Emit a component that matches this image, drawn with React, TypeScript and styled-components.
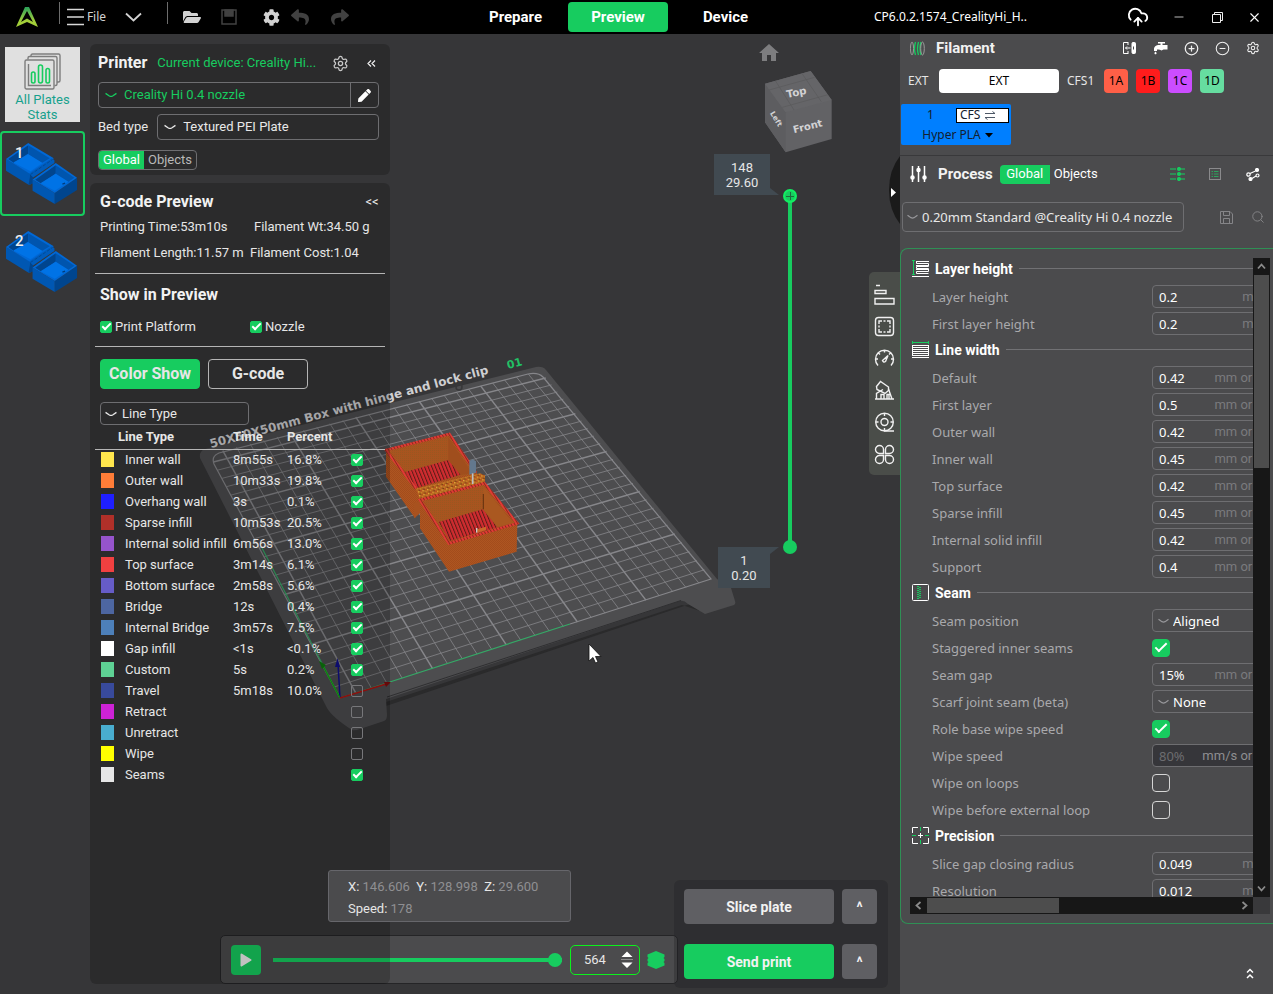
import React from "react";
import styled, { createGlobalStyle, css } from "styled-components";
import { CloudUpload, Settings, Search, CirclePlus, CircleMinus, Minus, X } from "lucide-react";
import { FaFolderOpen, FaCog, FaReply, FaShare, FaPen } from "react-icons/fa";
import { MdHome } from "react-icons/md";

const UI = 'Roboto, "Noto Sans", sans-serif';
const SYS = '"Noto Sans", "Open Sans", sans-serif';
const GREEN = "#17cc5f";

const Global = createGlobalStyle`
  *, *::before, *::after { box-sizing: border-box; }
  html, body { margin: 0; padding: 0; background: #363638; }
  body { font-family: ${UI}; font-size: 13px; line-height: 16px; color: #e6e6e6; }
  button, input, select { font: inherit; color: inherit; margin: 0; }
  button { padding: 0; border: 0; background: none; cursor: pointer; }
  h2, h3, p, ul { margin: 0; padding: 0; }
  svg { display: block; flex: none; }
`;

const Shell = styled.div`
  display: flex;
  flex-direction: column;
  min-height: 100vh;
`;

/* ---------- title bar ---------- */

const TitleBar = styled.header`
  display: grid;
  grid-template-columns: 1fr 320px 490px;
  align-items: center;
  height: 34px;
  background: #000;
  font-family: ${SYS};
`;
const BarTools = styled.div`
  display: flex;
  align-items: center;
  padding-left: 15px;
`;
const BarRule = styled.span<{ $ml: number }>`
  width: 1px;
  height: 22px;
  margin-left: ${(p) => p.$ml}px;
  margin-top: -8px;
  background: #6d6d6d;
`;
const BarButton = styled.button<{ $w: number; $ml?: number; $dim?: boolean }>`
  display: flex;
  flex: none;
  align-items: center;
  justify-content: center;
  gap: 3px;
  width: ${(p) => p.$w}px;
  height: 30px;
  margin-left: ${(p) => p.$ml ?? 0}px;
  font-size: 12px;
  color: ${(p) => (p.$dim ? "#414141" : "#d2d2d2")};
`;
const BarNav = styled.nav`
  display: flex;
  font-family: ${UI};
`;
const NavTab = styled.button<{ $w: number; $on?: boolean }>`
  width: ${(p) => p.$w}px;
  height: 30px;
  border-radius: 4px;
  font-size: 15px;
  font-weight: 700;
  color: #fff;
  background: ${(p) => (p.$on ? GREEN : "transparent")};
`;
const BarRight = styled.div`
  display: flex;
  align-items: center;
  padding-left: 91px;
  color: #fff;
`;
const FileTitle = styled.span`
  flex: 1;
  font-size: 12px;
`;

/* ---------- workspace ---------- */

const Workspace = styled.div`
  display: flex;
  flex: 1;
`;
const Viewport = styled.main`
  position: relative;
  display: flex;
  flex: 1;
  min-width: 0;
  overflow: hidden;
  background: #363638;
`;
const SceneSvg = styled.svg`
  position: absolute;
  left: 0;
  top: 0;
`;
const PlateList = styled.div`
  position: relative;
  display: flex;
  flex-direction: column;
  align-items: center;
  gap: 3px;
  width: 85px;
  padding-top: 13px;
`;
const StatsCard = styled.button`
  display: flex;
  flex-direction: column;
  align-items: center;
  width: 75px;
  height: 75px;
  margin-bottom: 6px;
  padding-top: 6px;
  background: #e0e0e0;
  color: #17a08d;
  line-height: 15px;
`;
const StatsText = styled.span`
  margin-top: 2px;
`;
const PlateCard = styled.button<{ $on?: boolean }>`
  position: relative;
  width: 85px;
  height: 85px;
  border: 2px solid ${(p) => (p.$on ? GREEN : "transparent")};
  border-radius: 4px;
`;
const PlateNo = styled.span`
  position: absolute;
  left: 13px;
  top: 12px;
  font-size: 15px;
  font-weight: 500;
  color: #eee;
`;
const ThumbSvg = styled.svg`
  margin: -2px;
`;

const PanelColumn = styled.div`
  position: relative;
  display: flex;
  flex-direction: column;
  gap: 8px;
  width: 300px;
  margin: 10px 0 10px 5px;
`;
const Panel = styled.section<{ $grow?: boolean }>`
  flex: ${(p) => (p.$grow ? "1" : "none")};
  padding: ${(p) => (p.$grow ? "9px 5px" : "8px 11px 5px 8px")};
  border-radius: 6px;
  background: rgba(0, 0, 0, 0.2);
`;
const Row = styled.div<{ $gap?: number; $h: number }>`
  display: flex;
  align-items: center;
  gap: ${(p) => p.$gap ?? 0}px;
  height: ${(p) => p.$h}px;
`;
const Title = styled.h2`
  font-size: 16px;
  line-height: 20px;
  font-weight: 700;
  color: #f2f2f2;
`;
const GrowTitle = styled(Title)`
  flex: 1;
`;
const Device = styled.span`
  flex: 1;
  color: ${GREEN};
`;
const IconButton = styled.button<{ $c?: string }>`
  display: flex;
  align-items: center;
  justify-content: center;
  min-width: 16px;
  height: 20px;
  color: ${(p) => p.$c ?? "#f0f0f0"};
`;

const Combo = styled.div<{ $h: number; $w?: number; $gap?: number; $c?: string }>`
  display: flex;
  align-items: center;
  gap: ${(p) => p.$gap ?? 7}px;
  flex: ${(p) => (p.$w ? "none" : "1")};
  width: ${(p) => (p.$w ? p.$w + "px" : "auto")};
  height: ${(p) => p.$h}px;
  padding-left: ${(p) => (p.$gap ? 4 : 6)}px;
  border: 1px solid #6e6e71;
  border-radius: 4px;
  color: ${(p) => p.$c ?? "#e8e8e8"};
`;
const Select = styled.select`
  flex: 1;
  min-width: 0;
  padding: 0;
  border: 0;
  outline: 0;
  appearance: none;
  background: transparent;
  color: inherit;
`;
const EditButton = styled.button`
  display: flex;
  align-items: center;
  justify-content: center;
  align-self: stretch;
  width: 28px;
  border-left: 1px solid #6e6e71;
  color: #fff;
`;
const Segments = styled.div`
  display: flex;
  width: 99px;
  height: 20px;
  margin-top: 12px;
  border: 1px solid #6e6e71;
  border-radius: 4px;
  overflow: hidden;
`;
const Segment = styled.button<{ $w: number; $on?: boolean }>`
  width: ${(p) => p.$w}px;
  color: ${(p) => (p.$on ? "#fff" : "#b9b9b9")};
  background: ${(p) => (p.$on ? GREEN : "transparent")};
`;

const Block = styled.div`
  padding: 0 5px;
  border-bottom: 1px solid #b5b5b5;
`;
const Stats = styled.div`
  display: grid;
  grid-template-columns: 150px 1fr;
  row-gap: 10px;
  padding: 7px 0 12px;
  white-space: nowrap;
`;
const Indent = styled.span`
  padding-left: 4px;
`;
const CheckGroup = styled.div`
  display: grid;
  grid-template-columns: 150px 1fr;
  padding: 3px 0 11px;
`;
const CheckLabel = styled.label`
  display: flex;
  align-items: center;
  gap: 3px;
`;
const Check = styled.input.attrs({ type: "checkbox" })<{ $s: number }>`
  flex: none;
  width: ${(p) => p.$s}px;
  height: ${(p) => p.$s}px;
  appearance: none;
  display: grid;
  place-items: center;
  border: 1px solid ${(p) => (p.$s > 14 ? "#d5d5d5" : "#77777a")};
  border-radius: ${(p) => (p.$s > 14 ? 4 : 2)}px;
  &:checked {
    border-color: ${GREEN};
    background: ${GREEN};
  }
  &:checked::after {
    content: "";
    width: ${(p) => (p.$s > 14 ? 12 : 9)}px;
    height: ${(p) => (p.$s > 14 ? 6 : 5)}px;
    margin-bottom: ${(p) => (p.$s > 14 ? 4 : 3)}px;
    border: solid #fff;
    border-width: 0 0 2px 2px;
    transform: rotate(-45deg);
  }
`;
const Modes = styled.div`
  display: flex;
  gap: 8px;
  padding: 12px 5px 13px;
`;
const ModeButton = styled.button<{ $on?: boolean }>`
  width: 100px;
  height: 30px;
  border: 1px solid ${(p) => (p.$on ? GREEN : "#b5b5b5")};
  border-radius: 4px;
  font-size: 16px;
  font-weight: 700;
  background: ${(p) => (p.$on ? GREEN : "transparent")};
`;
const ComboPad = styled.div`
  padding-left: 5px;
`;
const TypeTable = styled.table`
  width: 100%;
  table-layout: fixed;
  border-collapse: collapse;
  white-space: nowrap;
  th {
    height: 24px;
    padding: 0;
    border-bottom: 1px solid #b5b5b5;
    text-align: left;
    font-weight: 700;
  }
  td {
    height: 21px;
    padding: 0;
  }
`;
const Col = styled.col<{ $w: number }>`
  width: ${(p) => p.$w}px;
`;
const TypeName = styled.div`
  display: flex;
  align-items: center;
  gap: 11px;
  padding-left: 6px;
`;
const HeadPad = styled.th`
  && { padding-left: 23px; }
`;
const Swatch = styled.span<{ $c: string }>`
  width: 13px;
  height: 15px;
  background: ${(p) => p.$c};
`;

/* ---------- floating widgets over the canvas ---------- */

const Player = styled.div`
  position: absolute;
  left: 220px;
  right: 222px;
  bottom: 10px;
  display: flex;
  align-items: center;
  height: 49px;
  padding: 0 12px 0 10px;
  border: 1px solid #252527;
  border-radius: 5px;
  background: #4b4b4d;
`;
const PlayButton = styled.button`
  display: grid;
  place-items: center;
  width: 30px;
  height: 30px;
  border-radius: 4px;
  background: ${GREEN};
`;
const thumb = css`
  appearance: none;
  width: 14px;
  height: 14px;
  border: 0;
  border-radius: 7px;
  background: ${GREEN};
`;
const StepRange = styled.input.attrs({ type: "range" })`
  flex: 1;
  min-width: 0;
  height: 14px;
  margin: 0 8px 0 12px;
  appearance: none;
  background: linear-gradient(${GREEN}, ${GREEN}) center / 100% 4px no-repeat;
  &::-webkit-slider-thumb { ${thumb} }
`;
const Stepper = styled.div`
  display: flex;
  align-items: center;
  width: 70px;
  height: 30px;
  padding: 0 6px 0 13px;
  border: 1px solid #0cf21c;
  border-radius: 5px;
`;
const StepInput = styled.input`
  flex: 1;
  min-width: 0;
  padding: 0;
  border: 0;
  outline: 0;
  background: transparent;
`;
const LayersIcon = styled.span`
  margin-left: 7px;
`;
const Readout = styled.div`
  position: absolute;
  left: 328px;
  bottom: 72px;
  width: 243px;
  height: 52px;
  padding: 5px 19px;
  border: 1px solid #66666b;
  border-radius: 3px;
  background: #4b4b4d;
  line-height: 22px;
  white-space: pre;
  color: #8f8f92;
  b { font-weight: 400; color: #e6e6e6; }
`;
const ActionBox = styled.div`
  position: absolute;
  right: 12px;
  bottom: 6px;
  display: grid;
  grid-template-columns: 150px 35px;
  gap: 20px 8px;
  padding: 9px 11px 9px 10px;
  border-radius: 6px;
  background: rgba(30, 30, 32, 0.3);
`;
const ActionButton = styled.button<{ $go?: boolean }>`
  height: 35px;
  border-radius: 4px;
  font-weight: 700;
  font-size: 14px;
  color: #f2f2f2;
  background: ${(p) => (p.$go ? GREEN : "#5f5f63")};
`;
const ViewGizmo = styled.div`
  position: absolute;
  right: 66px;
  top: 7px;
  display: flex;
  flex-direction: column;
  gap: 5px;
`;
const HomeButton = styled.button`
  width: 24px;
  margin-left: -7px;
  color: #7d7d7f;
`;
const LayerSlider = styled.div`
  position: absolute;
  right: 103px;
  top: 155px;
  display: grid;
  width: 14px;
  height: 365px;
`;
const LayerRange = styled.input.attrs({ type: "range" })<{ $top?: boolean }>`
  grid-area: 1 / 1;
  width: 14px;
  height: 365px;
  appearance: none;
  writing-mode: vertical-lr;
  direction: rtl;
  background: ${(p) => (p.$top ? `linear-gradient(${GREEN}, ${GREEN}) center / 4px 351px no-repeat` : "transparent")};
  pointer-events: none;
  &::-webkit-slider-thumb {
    ${thumb}
    pointer-events: auto;
    ${(p) =>
      p.$top &&
      css`
        border: 2px solid #12ee62;
        background: linear-gradient(#1d6b3c, #1d6b3c) center / 8px 1px no-repeat,
          linear-gradient(#1d6b3c, #1d6b3c) center / 1px 8px no-repeat, ${GREEN};
      `}
  }
`;
const LayerTip = styled.div<{ $low?: boolean }>`
  position: absolute;
  right: 130px;
  top: ${(p) => (p.$low ? 513 : 120)}px;
  width: ${(p) => (p.$low ? 52 : 56)}px;
  height: 41px;
  padding-top: 6px;
  background: #414a51;
  line-height: 15px;
  text-align: center;
  &::after {
    content: "";
    position: absolute;
    left: 100%;
    ${(p) => (p.$low ? "top: 0;" : "bottom: 0;")}
    border-left: 9px solid #414a51;
    border-${(p) => (p.$low ? "bottom" : "top")}: 7px solid transparent;
  }
`;
const ToolStrip = styled.div`
  position: absolute;
  right: 0;
  top: 238px;
  display: flex;
  flex-direction: column;
  align-items: center;
  gap: 12px;
  width: 31px;
  padding: 12px 1px 11px 0;
  border-radius: 5px 0 0 5px;
  background: #4a4d49;
  color: #fff;
`;
const CollapseTab = styled.button`
  position: absolute;
  right: 0;
  top: 122px;
  width: 11px;
  height: 68px;
`;

/* ---------- sidebar ---------- */

const Sidebar = styled.aside`
  display: flex;
  flex-direction: column;
  flex: none;
  width: 373px;
  background: #4b4b4d;
  font-family: ${SYS};
`;
const SideHead = styled.div<{ $h: number }>`
  display: flex;
  align-items: center;
  height: ${(p) => p.$h}px;
  padding: 0 12px 0 10px;
`;
const SideIcons = styled.div<{ $gap: number }>`
  display: flex;
  flex: 1;
  align-items: center;
  justify-content: flex-end;
  gap: ${(p) => p.$gap}px;
`;
const HeadText = styled.h2`
  margin-left: 11px;
  font-family: ${UI};
  font-size: 15px;
  font-weight: 700;
  color: #f2f2f2;
`;
const SlotRow = styled.div`
  display: flex;
  align-items: center;
  gap: 8px;
  padding: 7px 8px 11px;
  font-size: 12px;
`;
const SlotName = styled.span<{ $w: number }>`
  width: ${(p) => p.$w}px;
`;
const Slot = styled.button<{ $c: string; $w: number }>`
  width: ${(p) => p.$w}px;
  height: 24px;
  border-radius: 4px;
  background: ${(p) => p.$c};
  color: #000;
`;
const Spool = styled.div`
  width: 110px;
  height: 41px;
  margin-left: 1px;
  padding: 3px 2px;
  border-radius: 2px;
  background: #007fff;
  color: #14202e;
  font-size: 12px;
`;
const SpoolTop = styled.div`
  display: flex;
  align-items: center;
  justify-content: space-between;
  padding-left: 24px;
`;
const CfsButton = styled.button`
  display: flex;
  align-items: center;
  gap: 4px;
  width: 53px;
  height: 15px;
  padding-left: 3px;
  border: 1px solid #000;
  background: #fff;
`;
const SpoolName = styled.button`
  display: flex;
  align-items: center;
  justify-content: center;
  gap: 4px;
  width: 100%;
  height: 24px;
  padding-left: 3px;
`;
const SideRule = styled.div`
  height: 1px;
  margin-top: 10px;
  background: #39393b;
`;
const ProcTabs = styled.div`
  display: flex;
  height: 19px;
  margin-left: 7px;
  font-family: ${UI};
`;
const ProcTab = styled.button<{ $on?: boolean }>`
  width: ${(p) => (p.$on ? 50 : 52)}px;
  height: 19px;
  border-radius: 4px 0 0 4px;
  color: #fff;
  background: ${(p) => (p.$on ? GREEN : "transparent")};
`;
const Preset = styled.div`
  display: flex;
  align-items: center;
  padding: 10px 7px 0 2px;
`;
const Frame = styled.div`
  display: grid;
  grid-template-columns: 1fr 17px;
  grid-template-rows: 639px 17px;
  margin-top: 16px;
  padding: 9px 3px 9px 9px;
  border: 1px solid #2f8f55;
  border-right: 0;
  border-radius: 8px 0 0 8px;
`;
const Scroller = styled.div`
  min-width: 0;
  overflow: hidden;
`;
const Form = styled.form`
  width: 361px;
  margin-top: -3px;
`;
const Group = styled.h3`
  display: flex;
  align-items: center;
  gap: 6px;
  height: 27px;
  padding-left: 2px;
  font-family: ${UI};
  font-size: 14px;
  font-weight: 700;
  color: #fff;
  &::after {
    content: "";
    flex: 1;
    height: 1px;
    background: #717174;
  }
`;
const Field = styled.div`
  display: flex;
  align-items: center;
  height: 27px;
  padding: 2px 0 0 22px;
`;
const FieldLabel = styled.label`
  width: 220px;
  color: #a9a9ac;
`;
const Box = styled.div<{ $off?: boolean; $pick?: boolean }>`
  display: flex;
  align-items: center;
  gap: 4px;
  width: 119px;
  height: 23px;
  padding: 0 5px 0 ${(p) => (p.$pick ? 5 : 6)}px;
  border: 1px solid #6e6e71;
  border-radius: 4px;
  background: ${(p) => (p.$off ? "#36363a" : "transparent")};
  color: ${(p) => (p.$off ? "#6d6d70" : "#fff")};
`;
const BoxInput = styled.input`
  flex: 1;
  min-width: 0;
  padding: 0;
  border: 0;
  outline: 0;
  background: transparent;
`;
const Unit = styled.span<{ $off?: boolean }>`
  font-family: ${UI};
  color: ${(p) => (p.$off ? "#8e8e91" : "#7a7a7d")};
`;
const VBar = styled.div`
  display: flex;
  flex-direction: column;
  justify-content: space-between;
  padding: 0 1px;
  background: #171717;
`;
const HBar = styled.div`
  display: flex;
  padding: 1px 0;
  background: #171717;
`;
const ScrollArrow = styled.button`
  display: grid;
  place-items: center;
  flex: none;
  width: 17px;
  height: 17px;
  color: #8b8b8b;
  ${VBar} & { width: 15px; }
  ${HBar} & { height: 15px; }
`;
const VThumb = styled.div`
  height: 193px;
  margin-bottom: auto;
  background: #4d4d4d;
`;
const HThumb = styled.div`
  width: 132px;
  margin-right: auto;
  background: #4d4d4d;
`;
const Corner = styled.div`
  background: #39393b;
`;
const SideFoot = styled.div`
  display: flex;
  flex: 1;
  align-items: flex-end;
  justify-content: flex-end;
  padding: 0 15px 11px;
`;

/* ---------- drawings ---------- */

const Chevron = ({ c = "currentColor", w = 11 }: { c?: string; w?: number }) => (
  <svg width={w} height={w / 2} viewBox="0 0 11 5" fill="none" stroke={c} strokeWidth="1.2">
    <path d="M0.5 1L4 3.4Q5.500 4.200 7 3.400L10.500 1" />
  </svg>
);
const Arrow = ({ r }: { r: number }) => (
  <svg width="9" height="9" viewBox="0 0 9 9" fill="none" stroke="currentColor" strokeWidth="1.800">
    <path d="M1 6.500L4.500 2.500L8 6.500" transform={`rotate(${r} 4.5 4.5)`} />
  </svg>
);

type Pt = [number, number];
const corners: Pt[] = [[209, 454], [540, 371], [712, 579], [340, 698]];
const project = (u: number, v: number): Pt => {
  const [[x0, y0], [x1, y1], [x2, y2], [x3, y3]] = corners;
  const dx1 = x1 - x2, dx2 = x3 - x2, sx = x0 - x1 + x2 - x3;
  const dy1 = y1 - y2, dy2 = y3 - y2, sy = y0 - y1 + y2 - y3;
  const d = dx1 * dy2 - dx2 * dy1;
  const g = (sx * dy2 - dx2 * sy) / d;
  const h = (dx1 * sy - sx * dy1) / d;
  const w = g * u + h * v + 1;
  return [
    ((x1 - x0 + g * x1) * u + (x3 - x0 + h * x3) * v + x0) / w,
    ((y1 - y0 + g * y1) * u + (y3 - y0 + h * y3) * v + y0) / w,
  ];
};
const seg = (a: Pt, b: Pt) => `M${a[0].toFixed(2)} ${a[1].toFixed(2)}L${b[0].toFixed(2)} ${b[1].toFixed(2)}`;
const CELLS = 26;
const gridPath = (major: boolean) => {
  let d = "";
  for (let i = 1; i < CELLS; i++) {
    if ((i % 5 === 1) !== major) continue;
    d += seg(project(i / CELLS, 0), project(i / CELLS, 1));
    d += seg(project(0, i / CELLS), project(1, i / CELLS));
  }
  return d;
};

const Scene = () => (
  <SceneSvg width="900" height="960" viewBox="0 34 900 960" aria-hidden="true">
    <defs>
      <pattern id="floor" width="10" height="10" patternUnits="userSpaceOnUse" patternTransform="rotate(-22)">
        <rect width="10" height="10" fill="#d02c30" />
        <rect width="3" height="10" fill="#5a1c17" />
      </pattern>
      <pattern id="rim" width="9" height="9" patternUnits="userSpaceOnUse" patternTransform="rotate(-30)">
        <rect width="9" height="9" fill="#e03a35" />
        <rect width="3" height="9" fill="#8d2a1c" />
      </pattern>
      <pattern id="weave" width="6" height="6" patternUnits="userSpaceOnUse">
        <rect width="6" height="6" fill="#ae5621" />
        <rect width="3" height="3" fill="#a34c1c" />
        <rect x="3" y="3" width="3" height="3" fill="#a34c1c" />
      </pattern>
      <pattern id="inner" width="6" height="6" patternUnits="userSpaceOnUse">
        <rect width="6" height="6" fill="#a8541f" />
        <rect width="3" height="3" fill="#9a5720" />
      </pattern>
      <pattern id="mix" width="14" height="12" patternUnits="userSpaceOnUse" patternTransform="rotate(-14)">
        <rect width="14" height="12" fill="#b5601f" />
        <rect width="4" height="4" fill="#e0b53a" />
        <rect x="7" y="5" width="5" height="3" fill="#d8a52f" />
        <rect x="4" y="8" width="4" height="4" fill="#6e3512" />
        <rect x="10" width="3" height="3" fill="#c23a22" />
      </pattern>
    </defs>

    <path d="M386 702L682 605L700 611L690 604L386 706Z" fill="#2a2a2b" />
    <path
      d="M205 449Q199 451 200 458L327 708Q332 717 352 730Q355 731 360 729L384 721Q387 720 387 715L386 699L680 601Q684 600 688 604L705 614L734 605Q736 604 735 601L731 588L717 579L546 370Q543 366 536 367Z"
      fill="#4d4d4f"
    />
    <path d="M387 697L681 600.500" stroke="#2f2f31" strokeWidth="1" />
    <g fill="none" stroke="#86868a">
      <path d={gridPath(false)} strokeWidth="0.8" />
      <path d={gridPath(true)} strokeWidth="1.500" />
      <path d="M340 698L214 464Q211 456 219 453L528 374Q538 372 543 377L711 579L570 624" strokeWidth="1.200" />
    </g>
    <path d="M340 698L262 548M340 698L570 624" stroke="#35a866" strokeWidth="1.200" />
    <circle cx="459" cy="387" r="3" fill="none" stroke="#38383a" strokeWidth="1.500" />
    <text transform="translate(211 448) rotate(-15)" fontFamily="DejaVu Sans" fontWeight="700" fontSize="12" fill="#cfcfd1">
      50X50X50mm Box with hinge and lock clip
    </text>
    <text transform="translate(508 369) rotate(-15)" fontFamily="DejaVu Sans" fontWeight="700" fontSize="11" fill="#22c065">
      01
    </text>

    <path d="M340 698L338 664" stroke="#10108a" strokeWidth="1.500" />
    <path d="M335 667L337.500 658L340 667Z" fill="#10108a" />
    <path d="M340 698L323 666" stroke="#12a012" strokeWidth="1.500" />
    <path d="M319 661L326 665L322 669Z" fill="#0c7a0c" />
    <path d="M340 698L386 684" stroke="#b01212" strokeWidth="1.500" />
    <path d="M391 682L384 682L386 687Z" fill="#7d0c0c" />

    <g transform="translate(380 340) scale(0.33333)">
      <path d="M18 330L208 282L290 398L300 480L120 500L105 535L18 410Z" fill="url(#weave)" />
      <path d="M32 334L204 292L280 400L112 440Z" fill="url(#inner)" />
      <path d="M75 396L205 360L242 404L110 444Z" fill="url(#floor)" />
      <path d="M205 292L205 360L242 404L276 400Z" fill="#a04e1d" />
      <path d="M108 446L18 330L208 282L288 398" fill="none" stroke="url(#rim)" strokeWidth="8" />
      <path d="M108 446L300 400L315 406L315 428L120 480Z" fill="url(#mix)" />
      <path d="M100 488L120 484L120 520L103 535Z" fill="#a8521f" />
      <path d="M120 480L313 430L412 550L410 635L207 695L120 565Z" fill="url(#weave)" />
      <path d="M134 484L310 438L400 550L208 602Z" fill="url(#inner)" />
      <path d="M176 546L308 508L352 562L210 602Z" fill="url(#floor)" />
      <path d="M310 440L310 508L352 560L400 550Z" fill="#aa5820" />
      <path d="M310 462V508" stroke="#63300f" strokeWidth="3" />
      <path d="M290 568L318 560L318 570L292 578Z" fill="#c8682a" />
      <path d="M290 564V578" stroke="#c9c9cc" strokeWidth="4" />
      <path d="M120 480L313 430L412 550L207 610Z" fill="none" stroke="url(#rim)" strokeWidth="8" />
      <path d="M268 364L278 358L288 364L288 398L268 404Z" fill="#63788d" />
      <path d="M278 400V432" stroke="#b9c0c6" strokeWidth="5" />
    </g>

    <path d="M589 644V661L593 657.500L595.500 663L598 662L595.500 656.500H601Z" fill="#fff" stroke="#111" strokeWidth="0.800" />
  </SceneSvg>
);

const Cube = () => (
  <svg width="70" height="84" viewBox="0 0 210 252" aria-hidden="true">
    <path d="M3 41L140 3L203 90V207L65 247L3 157Z" fill="#626265" />
    <path d="M3 41L65 127V247L3 157Z" fill="#5d5d60" />
    <path d="M3 41L140 3L203 90L65 127Z" fill="#656568" />
    <path d="M15 60L152 22M55 112L192 74M34 32L90 120M115 12L172 95" stroke="#59595b" strokeWidth="2" />
    <g fontFamily="DejaVu Sans" fontWeight="700" fill="#d2d2d4">
      <text transform="translate(70 84) rotate(-12)" fontSize="31">Top</text>
      <text transform="translate(90 190) rotate(-14)" fontSize="30">Front</text>
      <text transform="translate(17 130) rotate(58)" fontSize="22">Left</text>
    </g>
  </svg>
);

const BoxThumb = () => (
  <ThumbSvg width="85" height="85" viewBox="0 0 256 256" aria-hidden="true">
    <path d="M18 84L92 128V162L86 162L18 120Z" fill="#0057b2" />
    <path d="M92 128L100 122V158L86 162Z" fill="#00458e" />
    <path d="M18 84L85 36L162 82L92 130Z" fill="#0068d6" />
    <path d="M25 84L85 43V68L42 96Z" fill="#00458e" />
    <path d="M85 43L150 82L126 96L85 70Z" fill="#0055ae" />
    <path d="M40 95L85 70L128 96L92 121Z" fill="#0073e6" />
    <path d="M88 128L156 82L164 88V96L100 140Z" fill="#005cbc" />
    <path d="M92 131L158 86" stroke="#004a98" strokeWidth="3" strokeDasharray="10 5" />
    <path d="M98 146L165 187V220L98 180Z" fill="#0057b2" />
    <path d="M165 187L232 141V178L165 220Z" fill="#00458e" />
    <path d="M98 146L168 96L232 141L165 187Z" fill="#0068d6" />
    <path d="M106 147L168 103V128L124 158Z" fill="#00458e" />
    <path d="M168 103L224 141L204 154L168 130Z" fill="#0055ae" />
    <path d="M122 157L168 129L206 153L165 180Z" fill="#0073e6" />
    <path d="M188 160L196 157" stroke="#003c7c" strokeWidth="4" />
  </ThumbSvg>
);

const toolIcons = [
  <path key="a" d="M2 1.500H6M1 6.500H12V9.500H1ZM1 14.500H20V20H1Z" />,
  <g key="b">
    <rect x="1.500" y="1.500" width="18" height="18" rx="3" />
    <path d="M5 8V5H8M13 5H16V8M16 13V16H13M8 16H5V13M9.500 5H11.500M9.500 16H11.500M5 9.500V11.500M16 9.500V11.500" />
  </g>,
  <g key="c">
    <path d="M4 17.500A9 9 0 1 1 17 17.500M10.500 2V4.500M2 11H4M17 11H19.500M4.500 5L6 6.500M16.500 5L15 6.500" />
    <path d="M8.500 12.500L14 7.500L11.500 13.500Q9.500 15 8.500 12.500Z" />
  </g>,
  <g key="d">
    <path d="M1 19H20M2.500 19V13.500L9 9.500M7 19V14.500H10V19M13 19V14.500H15V19M18 19L14.500 9" />
    <path d="M2.500 6.500L6.500 1.500L14.500 7V10.500L11 13.500L3 9.500Z" />
  </g>,
  <g key="e">
    <circle cx="10.500" cy="10" r="8.800" />
    <circle cx="10.500" cy="10" r="3.500" />
    <path d="M10.500 1.500V4M10.500 16V19H20M2 10H4.500M16.500 10H19" />
  </g>,
  <path
    key="f"
    d="M9.500 9.500H5.500A4 4 0 1 1 9.500 5.500ZM11.500 9.500H15.500A4 4 0 1 0 11.500 5.500ZM9.500 11.500H5.500A4 4 0 1 0 9.500 15.500ZM11.500 11.500H15.500A4 4 0 1 1 11.500 15.500Z"
  />,
];

const GroupIcon = ({ kind }: { kind: string }) => (
  <svg width="17" height="17" viewBox="0 0 17 17" fill="none" stroke="#fff">
    {kind === "height" && (
      <>
        <path d="M16.500 1.500H4.500V3.500H16.500V6.500H4.500V8.500H16.500V11.500H4.500V13.500H16.500M4 1.500H17M4 5.500H17M4 9.500H17M0 16.500H17" />
        <path d="M1.500 0.500V14.500M0 0.500H3M0 14.500H3" stroke={GREEN} />
      </>
    )}
    {kind === "width" && (
      <>
        <path d="M0 4.500H17M0 6.500H17M0 8.500H17M0 10.500H17M0 12.500H17M0 14.500H17M0 16.500H17M0.500 4V15M16.500 4V15" />
        <path d="M0.500 1.500H16.500M0.500 0V3M16.500 0V3" stroke={GREEN} />
      </>
    )}
    {kind === "seam" && (
      <>
        <rect x="0.500" y="0.500" width="16" height="16" rx="1" />
        <path d="M6 2V15" stroke={GREEN} strokeDasharray="1 1" strokeWidth="2" />
        <path d="M8 3V15" stroke={GREEN} strokeDasharray="1 1" strokeWidth="2" />
      </>
    )}
    {kind === "precision" && (
      <>
        <path d="M6 0.500H0.500V6M11 0.500H16.500V6M16.500 11V16.500H11M6 16.500H0.500V11M6 8.500H11M8.500 6V11" />
        <path d="M8.500 0V4M8.500 13V17M0 8.500H4M13 8.500H17" stroke={GREEN} />
      </>
    )}
  </svg>
);

/* ---------- data ---------- */

const lineTypes: [string, string, string, string, boolean][] = [
  ["#ffe64d", "Inner wall", "8m55s", "16.8%", true],
  ["#ff7d38", "Outer wall", "10m33s", "19.8%", true],
  ["#1f1fff", "Overhang wall", "3s", "0.1%", true],
  ["#b03029", "Sparse infill", "10m53s", "20.5%", true],
  ["#9654cc", "Internal solid infill", "6m56s", "13.0%", true],
  ["#f04040", "Top surface", "3m14s", "6.1%", true],
  ["#665cc7", "Bottom surface", "2m58s", "5.6%", true],
  ["#4d66a1", "Bridge", "12s", "0.4%", true],
  ["#4d80ba", "Internal Bridge", "3m57s", "7.5%", true],
  ["#ffffff", "Gap infill", "<1s", "<0.1%", true],
  ["#5ed194", "Custom", "5s", "0.2%", true],
  ["#384a9c", "Travel", "5m18s", "10.0%", false],
  ["#cd22d6", "Retract", "", "", false],
  ["#49adcf", "Unretract", "", "", false],
  ["#ffff00", "Wipe", "", "", false],
  ["#e6e6e6", "Seams", "", "", true],
];

type FieldDef = { label: string; value?: string; unit?: string; pick?: string; on?: boolean; off?: boolean };
const groups: { title: string; icon: string; fields: FieldDef[] }[] = [
  {
    title: "Layer height",
    icon: "height",
    fields: [
      { label: "Layer height", value: "0.2", unit: "mm" },
      { label: "First layer height", value: "0.2", unit: "mm" },
    ],
  },
  {
    title: "Line width",
    icon: "width",
    fields: [
      ["Default", "0.42"],
      ["First layer", "0.5"],
      ["Outer wall", "0.42"],
      ["Inner wall", "0.45"],
      ["Top surface", "0.42"],
      ["Sparse infill", "0.45"],
      ["Internal solid infill", "0.42"],
      ["Support", "0.4"],
    ].map(([label, value]) => ({ label, value, unit: "mm or %" })),
  },
  {
    title: "Seam",
    icon: "seam",
    fields: [
      { label: "Seam position", pick: "Aligned" },
      { label: "Staggered inner seams", on: true },
      { label: "Seam gap", value: "15%", unit: "mm or %" },
      { label: "Scarf joint seam (beta)", pick: "None" },
      { label: "Role base wipe speed", on: true },
      { label: "Wipe speed", value: "80%", unit: "mm/s or %", off: true },
      { label: "Wipe on loops", on: false },
      { label: "Wipe before external loop", on: false },
    ],
  },
  {
    title: "Precision",
    icon: "precision",
    fields: [
      { label: "Slice gap closing radius", value: "0.049", unit: "mm" },
      { label: "Resolution", value: "0.012", unit: "mm" },
    ],
  },
];

const FormField = ({ id, f }: { id: string; f: FieldDef }) => (
  <Field>
    <FieldLabel htmlFor={id}>{f.label}</FieldLabel>
    {f.value !== undefined && (
      <Box $off={f.off}>
        <BoxInput id={id} defaultValue={f.value} disabled={f.off} />
        <Unit $off={f.off}>{f.unit}</Unit>
      </Box>
    )}
    {f.pick && (
      <Box $pick>
        <Chevron c="#97979a" />
        <Select id={id} defaultValue={f.pick}>
          <option>{f.pick}</option>
        </Select>
      </Box>
    )}
    {f.on !== undefined && <Check id={id} $s={18} defaultChecked={f.on} />}
  </Field>
);

export default function App() {
  return (
    <Shell>
      <Global />
      <TitleBar>
        <BarTools>
          <svg width="24" height="22" viewBox="0 0 24 22" aria-hidden="true">
            <defs>
              <linearGradient id="logo" x1="0" y1="1" x2="0" y2="0">
                <stop offset="0.3" stopColor="#a3cf3a" />
                <stop offset="1" stopColor="#2aa05a" />
              </linearGradient>
            </defs>
            <path d="M1 21L10 1H14L23 21L12 16ZM12 5L6 16L12 12.500L18 16Z" fill="url(#logo)" fillRule="evenodd" />
          </svg>
          <BarRule $ml={20} />
          <BarButton $w={53}>
            <svg width="17" height="18" viewBox="0 0 17 18" stroke="#d8d8d8" strokeWidth="1.600">
              <path d="M0 1.500H17M0 9H17M0 16.500H17" />
            </svg>
            File
          </BarButton>
          <BarButton $w={17} $ml={12} aria-label="More">
            <svg width="17" height="10" viewBox="0 0 17 10" fill="none" stroke="currentColor" strokeWidth="1.800">
              <path d="M1 1.500L8.500 8.500L16 1.500" />
            </svg>
          </BarButton>
          <BarRule $ml={25} />
          <BarButton $w={18} $ml={15} aria-label="Open"><FaFolderOpen size={18} /></BarButton>
          <BarButton $w={16} $ml={20} $dim aria-label="Save">
            <svg width="16" height="16" viewBox="0 0 16 16" fill="none" stroke="currentColor" strokeWidth="1.500">
              <path d="M1 1H15V15H1Z" />
              <path d="M4 1V7H12V1H10V4H8.500V1Z" fill="currentColor" />
            </svg>
          </BarButton>
          <BarButton $w={18} $ml={25} aria-label="Settings"><FaCog size={17} /></BarButton>
          <BarButton $w={18} $ml={11} $dim aria-label="Undo"><FaReply size={18} /></BarButton>
          <BarButton $w={18} $ml={22} $dim aria-label="Redo"><FaShare size={18} /></BarButton>
        </BarTools>
        <BarNav>
          <NavTab $w={105}>Prepare</NavTab>
          <NavTab $w={100} $on>Preview</NavTab>
          <NavTab $w={115}>Device</NavTab>
        </BarNav>
        <BarRight>
          <FileTitle>CP6.0.2.1574_CrealityHi_H..</FileTitle>
          <BarButton $w={44} aria-label="Upload"><CloudUpload size={22} color="#fff" strokeWidth={2} /></BarButton>
          <BarButton $w={38} aria-label="Minimize"><Minus size={14} strokeWidth={1.5} /></BarButton>
          <BarButton $w={38} aria-label="Restore">
            <svg width="11" height="11" viewBox="0 0 11 11" fill="none" stroke="#eee">
              <path d="M0.500 2.500H8.500V10.500H0.500ZM2.500 2.500V0.500H10.500V8.500H8.500" />
            </svg>
          </BarButton>
          <BarButton $w={37} aria-label="Close"><X size={15} strokeWidth={1.8} color="#fff" /></BarButton>
        </BarRight>
      </TitleBar>

      <Workspace>
        <Viewport>
          <Scene />
          <Player>
            <PlayButton aria-label="Play">
              <svg width="12" height="14" viewBox="0 0 12 14" fill="#f2f2f2" stroke="#f2f2f2" strokeLinejoin="round" strokeWidth="2">
                <path d="M1.500 1.500L10.500 7L1.500 12.500Z" />
              </svg>
            </PlayButton>
            <StepRange min={0} max={564} defaultValue={564} aria-label="Step" />
            <Stepper>
              <StepInput defaultValue="564" aria-label="Step number" />
              <svg width="12" height="18" viewBox="0 0 12 18" fill="#fff">
                <path d="M6 0.500L11.500 6H0.500ZM6 17L11.500 11.500H0.500Z" />
                <path d="M0 8.500H12" stroke="#8a8a8a" />
              </svg>
            </Stepper>
            <LayersIcon>
              <svg width="18" height="18" viewBox="0 0 18 18" fill={GREEN}>
                <path d="M9 0L17.500 3.500V6L16.500 7L17.500 8V10L16.500 11L17.500 12V14.500L9 18L0.500 14.500V12L1.500 11L0.500 10V8L1.500 7L0.500 6V3.500Z" />
              </svg>
            </LayersIcon>
          </Player>

          <PlateList>
            <StatsCard>
              <svg width="37" height="37" viewBox="0 0 37 37" fill="none" stroke="#7d7d7d" strokeWidth="1.400">
                <path d="M7 4V2.500Q7 1 8.500 1H34.500Q36 1 36 2.500V27.500Q36 29 34.500 29H33" />
                <path d="M4 6.500V5Q4 3.500 5.500 3.500H31.500Q33 3.500 33 5V31Q33 32.500 31.500 32.500H30.500" />
                <rect x="1" y="7" width="29" height="29" rx="1.500" />
                <path d="M4.500 11V32.500H27" />
                <g stroke={GREEN} strokeWidth="1.600">
                  <rect x="7.500" y="19" width="3.500" height="11" rx="1.700" />
                  <rect x="14.500" y="12" width="4" height="18" rx="1.900" />
                  <rect x="22" y="15.500" width="3.500" height="14.500" rx="1.700" />
                </g>
              </svg>
              <StatsText>All Plates<br />Stats</StatsText>
            </StatsCard>
            <PlateCard $on aria-label="Plate 1"><BoxThumb /><PlateNo>1</PlateNo></PlateCard>
            <PlateCard aria-label="Plate 2"><BoxThumb /><PlateNo>2</PlateNo></PlateCard>
          </PlateList>

          <PanelColumn>
            <Panel>
              <Row $h={22} $gap={10}>
                <Title>Printer</Title>
                <Device>Current device: Creality Hi...</Device>
                <Row $h={22} $gap={14}>
                  <IconButton aria-label="Printer settings" $c="#c8c8c8"><Settings size={17} strokeWidth={1.8} /></IconButton>
                  <IconButton aria-label="Fold printer panel">
                    <svg width="9" height="7" viewBox="0 0 9 7" fill="none" stroke="currentColor" strokeWidth="1.200">
                      <path d="M4 0.500L1 3.500L4 6.500M8 0.500L5 3.500L8 6.500" />
                    </svg>
                  </IconButton>
                </Row>
              </Row>
              <Row $h={42}>
                <Combo $h={26} $c={GREEN}>
                  <Chevron w={12} />
                  <Select aria-label="Printer preset"><option>Creality Hi 0.4 nozzle</option></Select>
                  <EditButton aria-label="Edit preset"><FaPen size={13} /></EditButton>
                </Combo>
              </Row>
              <Row $h={22} $gap={9}>
                <label htmlFor="bed">Bed type</label>
                <Combo $h={26}>
                  <Chevron w={12} />
                  <Select id="bed"><option>Textured PEI Plate</option></Select>
                </Combo>
              </Row>
              <Segments>
                <Segment $w={45} $on>Global</Segment>
                <Segment $w={52}>Objects</Segment>
              </Segments>
            </Panel>

            <Panel $grow>
              <Block>
                <Row $h={20}>
                  <GrowTitle>G-code Preview</GrowTitle>
                  <IconButton>&lt;&lt;</IconButton>
                </Row>
                <Stats>
                  <span>Printing Time:53m10s</span>
                  <Indent>Filament Wt:34.50 g</Indent>
                  <span>Filament Length:11.57 m</span>
                  <span>Filament Cost:1.04</span>
                </Stats>
              </Block>
              <Block>
                <Row $h={42}><Title>Show in Preview</Title></Row>
                <CheckGroup>
                  <CheckLabel><Check $s={12} defaultChecked />Print Platform</CheckLabel>
                  <CheckLabel><Check $s={12} defaultChecked />Nozzle</CheckLabel>
                </CheckGroup>
              </Block>
              <Modes>
                <ModeButton $on>Color Show</ModeButton>
                <ModeButton>G-code</ModeButton>
              </Modes>
              <ComboPad>
                <Combo $h={23} $w={149} $gap={5}>
                  <Chevron w={12} />
                  <Select aria-label="Color scheme"><option>Line Type</option></Select>
                </Combo>
              </ComboPad>
              <TypeTable>
                <colgroup>
                  <Col $w={138} />
                  <Col $w={54} />
                  <Col $w={64} />
                  <col />
                </colgroup>
                <thead>
                  <tr>
                    <HeadPad>Line Type</HeadPad>
                    <th>Time</th>
                    <th>Percent</th>
                    <th aria-label="Visible" />
                  </tr>
                </thead>
                <tbody>
                  {lineTypes.map(([c, name, time, pct, on]) => (
                    <tr key={name}>
                      <td><TypeName><Swatch $c={c} />{name}</TypeName></td>
                      <td>{time}</td>
                      <td>{pct}</td>
                      <td><Check $s={12} defaultChecked={on} aria-label={name} /></td>
                    </tr>
                  ))}
                </tbody>
              </TypeTable>
            </Panel>
          </PanelColumn>

          <ViewGizmo>
            <HomeButton aria-label="Home view"><MdHome size={24} /></HomeButton>
            <Cube />
          </ViewGizmo>
          <LayerTip>148<br />29.60</LayerTip>
          <LayerTip $low>1<br />0.20</LayerTip>
          <LayerSlider>
            <LayerRange $top min={1} max={148} defaultValue={148} aria-label="Top layer" />
            <LayerRange min={1} max={148} defaultValue={1} aria-label="Bottom layer" />
          </LayerSlider>
          <CollapseTab aria-label="Collapse sidebar">
            <svg width="11" height="68" viewBox="0 0 11 68">
              <path d="M11 0Q0 14 0 34Q0 54 11 68Z" fill="#1a1a1a" />
              <path d="M2 32V41L7 36.500Z" fill="#fff" />
            </svg>
          </CollapseTab>
          <ToolStrip>
            {toolIcons.map((icon, i) => (
              <IconButton key={i} aria-label={`Tool ${i + 1}`}>
                <svg width="21" height="21" viewBox="0 0 21 21" fill="none" stroke="currentColor" strokeWidth="1.400">{icon}</svg>
              </IconButton>
            ))}
          </ToolStrip>
          <Readout>
            <p><b>X:</b> 146.606  <b>Y:</b> 128.998  <b>Z:</b> 29.600</p>
            <p><b>Speed:</b> 178</p>
          </Readout>
          <ActionBox>
            <ActionButton>Slice plate</ActionButton>
            <ActionButton>^</ActionButton>
            <ActionButton $go>Send print</ActionButton>
            <ActionButton>^</ActionButton>
          </ActionBox>
        </Viewport>

        <Sidebar>
          <SideHead $h={28}>
            <svg width="15" height="15" viewBox="0 0 15 15" fill="none" stroke="#9a9a9a">
              <ellipse cx="2" cy="7.500" rx="1.500" ry="6.500" />
              <path d="M5.500 1Q3.500 7.500 5.500 14M8.500 1Q6.500 7.500 8.500 14M11 1Q9 7.500 11 14" stroke={GREEN} strokeWidth="1.300" />
              <ellipse cx="12.500" cy="7.500" rx="1.800" ry="6.500" />
            </svg>
            <HeadText>Filament</HeadText>
            <SideIcons $gap={15}>
              <IconButton aria-label="Sync filament">
                <svg width="13" height="12" viewBox="0 0 13 12" fill="none" stroke="#fff">
                  <path d="M5 0.500H0.500V11.500H5M5 0V3M5 9V12M2.500 6H7.500M4 4.500L2.500 6L4 7.500" />
                  <rect x="9" y="0.500" width="3.500" height="11" rx="1" fill="#fff" />
                  <path d="M10.500 4.500V7.500" stroke="#4b4b4d" />
                </svg>
              </IconButton>
              <IconButton aria-label="Flush">
                <svg width="15" height="14" viewBox="0 0 15 14" fill="#fff">
                  <path d="M5 1H12V2.500H9.500V4H14.500V8.500H10.500L8.500 9.500Q6.500 8 4 8.500V10H1V7.500Q1.500 4.500 5 4H7.500V2.500H5Z" />
                  <path d="M2.500 10.500Q4 12 3.500 12.800Q2.500 13.800 1.500 12.800Q1 12 2.500 10.500Z" />
                </svg>
              </IconButton>
              <IconButton aria-label="Add filament"><CirclePlus size={15} strokeWidth={2} /></IconButton>
              <IconButton aria-label="Remove filament"><CircleMinus size={15} strokeWidth={1.7} /></IconButton>
              <IconButton aria-label="Filament settings"><Settings size={14} strokeWidth={1.8} /></IconButton>
            </SideIcons>
          </SideHead>
          <SlotRow>
            <SlotName $w={23}>EXT</SlotName>
            <Slot $w={120} $c="#fff">EXT</Slot>
            <SlotName $w={29}>CFS1</SlotName>
            <Slot $w={24} $c="#ff5f47">1A</Slot>
            <Slot $w={24} $c="#ff1c1c">1B</Slot>
            <Slot $w={24} $c="#cb4dff">1C</Slot>
            <Slot $w={24} $c="#66dda0">1D</Slot>
          </SlotRow>
          <Spool>
            <SpoolTop>
              <span>1</span>
              <CfsButton>
                CFS
                <svg width="12" height="9" viewBox="0 0 12 9" fill="none" stroke="#4d5866">
                  <path d="M1 2.500H11L8.500 0.500M11 6.500H1L3.500 8.500" />
                </svg>
              </CfsButton>
            </SpoolTop>
            <SpoolName>
              Hyper PLA
              <svg width="8" height="5" viewBox="0 0 8 5" fill="#000"><path d="M0 0H8L4 4.500Z" /></svg>
            </SpoolName>
          </Spool>
          <SideRule />
          <SideHead $h={36}>
            <svg width="17" height="16" viewBox="0 0 17 16" fill="#fff" stroke="#fff" strokeWidth="1.500">
              <path d="M2.500 0V16M8.500 0V16M14.500 0V16" />
              <circle cx="2.500" cy="11.500" r="1.500" />
              <circle cx="8.500" cy="4" r="1.500" />
              <circle cx="14.500" cy="11.500" r="1.500" />
            </svg>
            <HeadText>Process</HeadText>
            <ProcTabs>
              <ProcTab $on>Global</ProcTab>
              <ProcTab>Objects</ProcTab>
            </ProcTabs>
            <SideIcons $gap={22}>
              <IconButton aria-label="Compare">
                <svg width="15" height="14" viewBox="0 0 15 14" fill={GREEN} stroke={GREEN} strokeWidth="1.300">
                  <path d="M0 2H6M0 7H6M0 12H6M8 2H15M8 7H15M8 12H15" opacity="0.700" />
                  <circle cx="9" cy="2" r="1.400" />
                  <circle cx="9" cy="7" r="1.400" />
                  <circle cx="9" cy="12" r="1.400" />
                </svg>
              </IconButton>
              <IconButton aria-label="List">
                <svg width="12" height="12" viewBox="0 0 12 12" fill="none" stroke="#8a8a8c">
                  <rect x="0.500" y="0.500" width="11" height="11" />
                  <path d="M2.500 3.500H4M5 3.500H9.500M2.500 6H4M5 6H9.500M2.500 8.500H4M5 8.500H9.500" stroke="#2da35c" />
                </svg>
              </IconButton>
              <IconButton aria-label="Flow">
                <svg width="14" height="13" viewBox="0 0 14 13" fill="none" stroke="#fff" strokeWidth="1.200">
                  <circle cx="2.500" cy="6.500" r="1.700" />
                  <circle cx="11" cy="2" r="1.500" fill="#fff" />
                  <circle cx="11.500" cy="7.500" r="1.500" />
                  <circle cx="4.500" cy="11" r="1.500" fill="#fff" />
                  <path d="M4 5.500L9.500 3M6 10.500L10 8" />
                </svg>
              </IconButton>
            </SideIcons>
          </SideHead>
          <Preset>
            <Combo $h={30} $w={282} $gap={4}>
              <Chevron c="#97979a" />
              <Select aria-label="Process preset"><option>0.20mm Standard @Creality Hi 0.4 nozzle</option></Select>
            </Combo>
            <SideIcons $gap={16}>
              <IconButton aria-label="Save preset" $c="#858588">
                <svg width="13" height="13" viewBox="0 0 13 13" fill="none" stroke="currentColor">
                  <path d="M0.500 0.500H10L12.500 3V12.500H0.500ZM3.500 0.500V4.500H9.500V0.500M3.500 12.500V7.500H9.500V12.500" />
                </svg>
              </IconButton>
              <IconButton aria-label="Search" $c="#858588"><Search size={14} strokeWidth={1.6} /></IconButton>
            </SideIcons>
          </Preset>
          <Frame>
            <Scroller>
              <Form>
                {groups.map((g) => (
                  <React.Fragment key={g.title}>
                    <Group><GroupIcon kind={g.icon} />{g.title}</Group>
                    {g.fields.map((f) => (
                      <FormField key={f.label} id={`${g.icon}-${f.label.replace(/\W+/g, "-")}`} f={f} />
                    ))}
                  </React.Fragment>
                ))}
              </Form>
            </Scroller>
            <VBar>
              <ScrollArrow aria-label="Scroll up"><Arrow r={0} /></ScrollArrow>
              <VThumb />
              <ScrollArrow aria-label="Scroll down"><Arrow r={180} /></ScrollArrow>
            </VBar>
            <HBar>
              <ScrollArrow aria-label="Scroll left"><Arrow r={-90} /></ScrollArrow>
              <HThumb />
              <ScrollArrow aria-label="Scroll right"><Arrow r={90} /></ScrollArrow>
            </HBar>
            <Corner />
          </Frame>
          <SideFoot>
            <IconButton aria-label="Expand">
              <svg width="8" height="11" viewBox="0 0 8 11" fill="none" stroke="#fff" strokeWidth="1.500">
                <path d="M1 4.500L4 1.500L7 4.500M1 10L4 7L7 10" />
              </svg>
            </IconButton>
          </SideFoot>
        </Sidebar>
      </Workspace>
    </Shell>
  );
}
